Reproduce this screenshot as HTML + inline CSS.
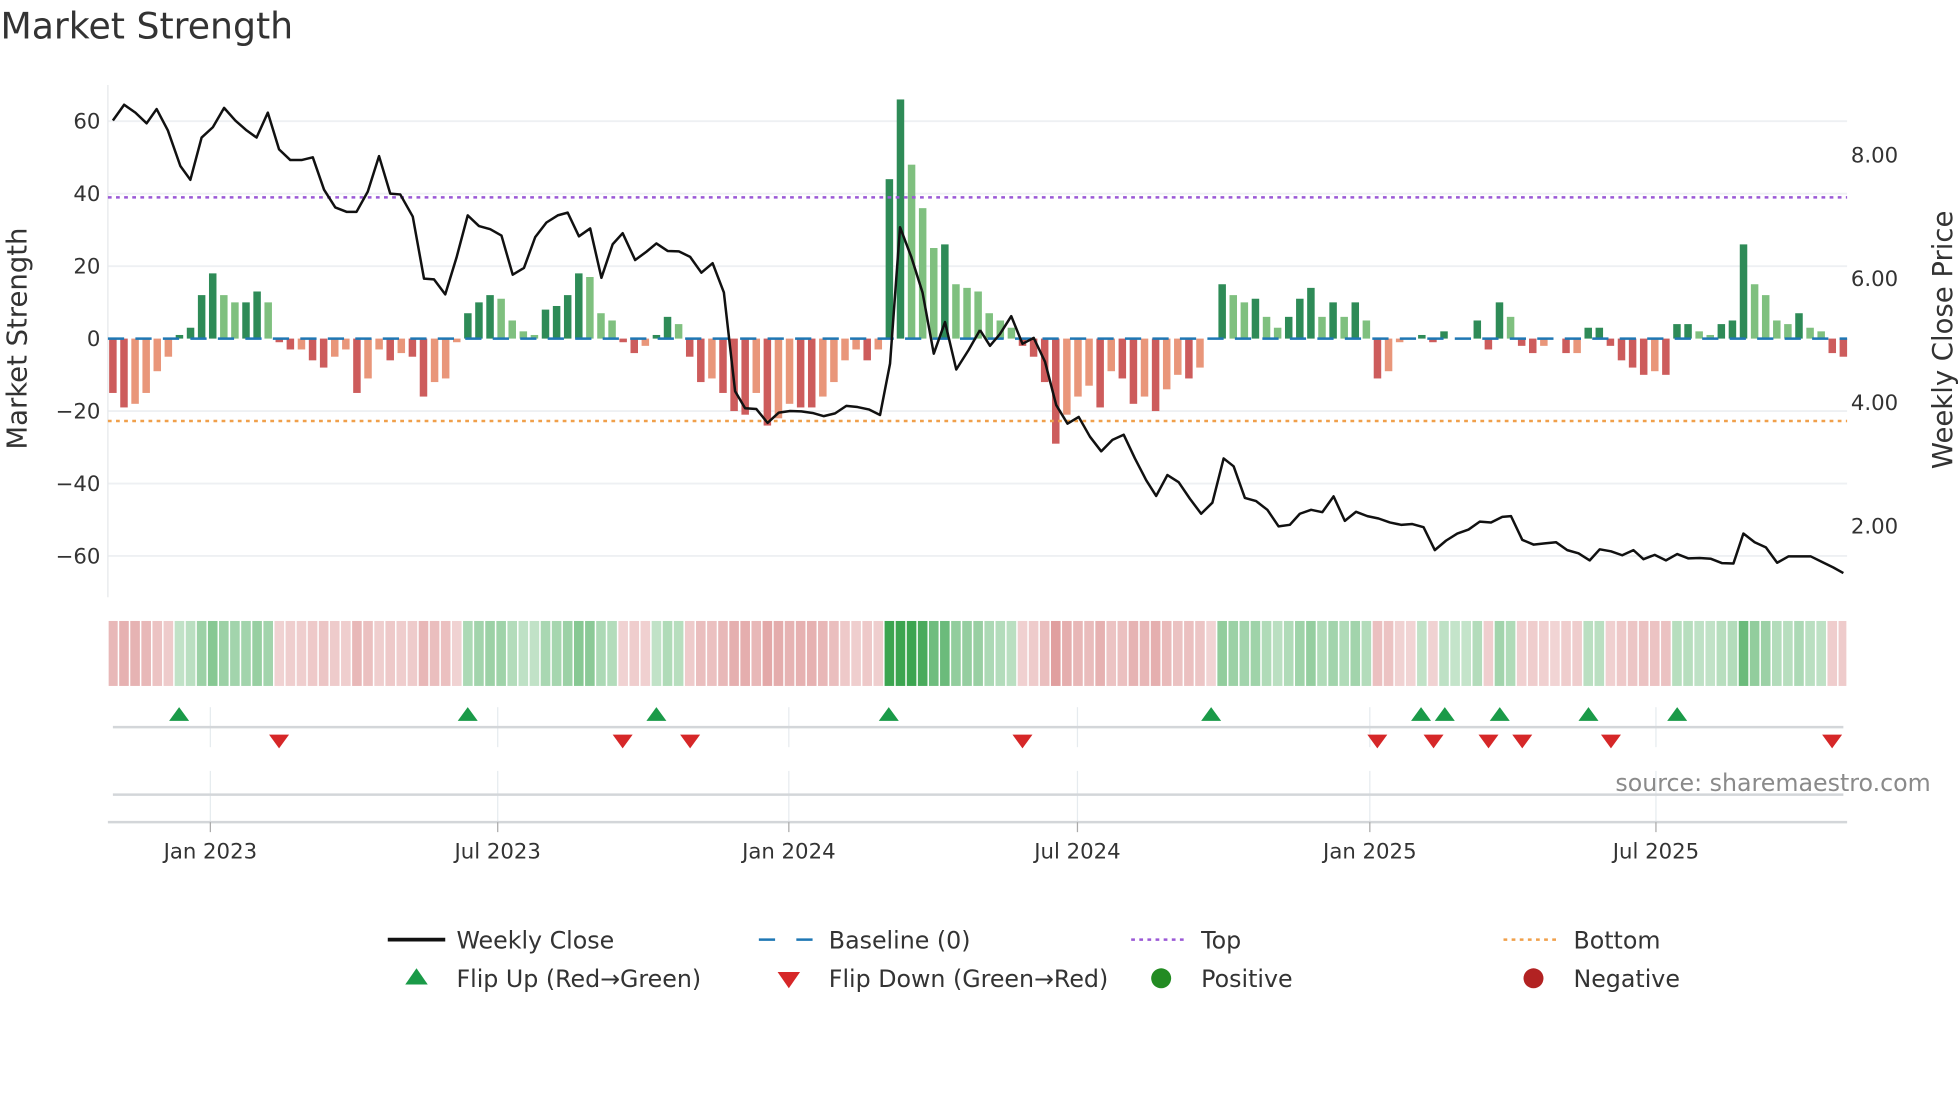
<!DOCTYPE html>
<html><head><meta charset="utf-8"><style>
html,body{margin:0;padding:0;background:#fff;}
svg{display:block;}
text{font-family:"DejaVu Sans","Liberation Sans",sans-serif;fill:#333;}
</style></head><body>
<svg id="s" xmlns="http://www.w3.org/2000/svg" width="1960" height="1102" viewBox="0 0 1568 882">
<rect width="1568" height="882" fill="#fff"/>
<text x="0" y="31" font-size="29">Market Strength</text>
<g stroke="#eef0f3" stroke-width="1.5">
<line x1="86" y1="97" x2="1478" y2="97"/><line x1="86" y1="155" x2="1478" y2="155"/>
<line x1="86" y1="213" x2="1478" y2="213"/><line x1="86" y1="329" x2="1478" y2="329"/>
<line x1="86" y1="387" x2="1478" y2="387"/><line x1="86" y1="445" x2="1478" y2="445"/>
</g>
<line x1="86" y1="68" x2="86" y2="478" stroke="#e6e8ea" stroke-width="1"/>
<g font-size="17" text-anchor="end">
<text x="80" y="103">60</text><text x="80" y="161">40</text><text x="80" y="219">20</text>
<text x="80" y="277">0</text><text x="80" y="335">−20</text><text x="80" y="393">−40</text><text x="80" y="451">−60</text>
</g>
<g font-size="17">
<text x="1481" y="130">8.00</text><text x="1481" y="229">6.00</text><text x="1481" y="328">4.00</text><text x="1481" y="427">2.00</text>
</g>
<text transform="translate(21,271) rotate(-90)" font-size="22" text-anchor="middle">Market Strength</text>
<text transform="translate(1562,272) rotate(-90)" font-size="22" text-anchor="middle">Weekly Close Price</text>
<g id="bars"></g>
<line x1="86" y1="271" x2="1478" y2="271" stroke="#1f77b4" stroke-width="2" stroke-dasharray="13,9"/>
<line x1="86" y1="158" x2="1478" y2="158" stroke="#9b59d6" stroke-width="2" stroke-dasharray="3,3.5"/>
<line x1="86" y1="337" x2="1478" y2="337" stroke="#f0a04b" stroke-width="2" stroke-dasharray="3,3.5"/>
<g fill="none" stroke="#111" stroke-width="2.5" stroke-linejoin="round">
<polyline vector-effect="non-scaling-stroke" transform="scale(0.5,0.3163)" points="180,305 198,265 216,285 234,312 250,276 268,330 288,420 304,455 322,348 340,322 358,273 376,305 394,330 410,348 428,285 446,378 464,405 482,405 500,398 518,480 536,525 554,536 570,536 588,485 606,395 624,490 640,492 660,548 678,705 694,707 712,745 730,652 748,545 766,572 784,580 802,596 820,695 838,678 856,600 874,563 892,545 908,538 926,598 944,578 962,703 980,618 996,590 1016,658 1034,637 1050,616 1068,635 1086,636 1104,650 1122,690 1140,666 1158,740 1176,990 1192,1033 1210,1035 1228,1070 1246,1044 1264,1040 1282,1041 1300,1045 1318,1053 1336,1046 1354,1027 1372,1030 1390,1036 1408,1050 1424,920 1440,575 1458,650 1476,740 1494,895 1512,815 1530,935 1550,885 1568,835"/>
<polyline vector-effect="non-scaling-stroke" transform="translate(784,0) scale(0.5,0.3163)" points="0,835 16,875 32,845 50,800 68,870 86,855 104,915 122,1025 140,1072 158,1055 176,1105 194,1142 212,1113 230,1100 248,1160 266,1215 282,1255 300,1202 318,1220 336,1262 354,1300 372,1272 390,1160 406,1180 424,1260 442,1268 460,1290 478,1332 496,1328 512,1300 530,1290 548,1296 566,1256 584,1318 602,1295 620,1306 638,1312 656,1322 674,1328 692,1326 710,1334 728,1392 746,1368 764,1350 782,1340 800,1320 818,1322 836,1308 850,1306 868,1366 886,1378 904,1375 922,1372 940,1392 958,1400 976,1418 992,1390 1010,1395 1028,1405 1046,1392 1062,1415 1080,1404 1098,1418 1116,1402 1134,1413 1152,1412 1170,1414 1188,1425 1206,1426 1222,1350 1240,1372 1258,1385 1276,1424 1294,1408 1312,1408 1330,1408 1348,1422 1366,1436 1382,1450"/>
</g>
<g id="strip"></g>
<g stroke="#e6ebef" stroke-width="1">
<line x1="168" y1="566" x2="168" y2="598"/><line x1="398" y1="566" x2="398" y2="598"/><line x1="631" y1="566" x2="631" y2="598"/><line x1="862" y1="566" x2="862" y2="598"/><line x1="1096" y1="566" x2="1096" y2="598"/><line x1="1325" y1="566" x2="1325" y2="598"/>
<line x1="168" y1="617" x2="168" y2="658"/><line x1="398" y1="617" x2="398" y2="658"/><line x1="631" y1="617" x2="631" y2="658"/><line x1="862" y1="617" x2="862" y2="658"/><line x1="1096" y1="617" x2="1096" y2="658"/><line x1="1325" y1="617" x2="1325" y2="658"/>
</g>
<line x1="90" y1="582" x2="1475" y2="582" stroke="#d3d6d9" stroke-width="2"/>
<line x1="90" y1="636" x2="1475" y2="636" stroke="#d3d6d9" stroke-width="2"/>
<line x1="86" y1="658" x2="1478" y2="658" stroke="#d3d6d9" stroke-width="2"/>
<g stroke="#aaa" stroke-width="1">
<line x1="168" y1="658" x2="168" y2="666"/><line x1="398" y1="658" x2="398" y2="666"/><line x1="631" y1="658" x2="631" y2="666"/><line x1="862" y1="658" x2="862" y2="666"/><line x1="1096" y1="658" x2="1096" y2="666"/><line x1="1325" y1="658" x2="1325" y2="666"/>
</g>
<g id="marks"></g>
<text x="1545" y="633" font-size="19" text-anchor="end" style="fill:#8a8a8a">source: sharemaestro.com</text>
<g font-size="17" text-anchor="middle">
<text x="168" y="687">Jan 2023</text><text x="398" y="687">Jul 2023</text><text x="631" y="687">Jan 2024</text>
<text x="862" y="687">Jul 2024</text><text x="1096" y="687">Jan 2025</text><text x="1325" y="687">Jul 2025</text>
</g>
<g font-size="19">
<line x1="310" y1="752" x2="356" y2="752" stroke="#111" stroke-width="3"/>
<text x="365" y="759">Weekly Close</text>
<line x1="607" y1="752" x2="651" y2="752" stroke="#1f77b4" stroke-width="2" stroke-dasharray="13,17"/>
<text x="663" y="759">Baseline (0)</text>
<line x1="905" y1="752" x2="949" y2="752" stroke="#9b59d6" stroke-width="2" stroke-dasharray="3,3.5"/>
<text x="961" y="759">Top</text>
<line x1="1203" y1="752" x2="1247" y2="752" stroke="#f0a04b" stroke-width="2" stroke-dasharray="3,3.5"/>
<text x="1259" y="759">Bottom</text>
<polygon points="324,788 342,788 333,775" fill="#1a9a48"/>
<text x="365" y="790">Flip Up (Red→Green)</text>
<polygon points="622,778 640,778 631,791" fill="#d62728"/>
<text x="663" y="790">Flip Down (Green→Red)</text>
<circle cx="929" cy="783" r="8" fill="#228b22"/>
<text x="961" y="790">Positive</text>
<circle cx="1227" cy="783" r="8" fill="#b22222"/>
<text x="1259" y="790">Negative</text>
</g>
</svg>
<script>
(function(){
var d="-15R,-19R,-18O,-15O,-9O,-5O,1D,3D,12D,18D,12L,10L,10D,13D,10L,-1R,-3R,-3O,-6R,-8R,-5O,-3O,-15R,-11O,-3O,-6R,-4O,-5R,-16R,-12O,-11O,-1O,7D,10D,12D,11L,5L,2L,1L,8D,9D,12D,18D,17L,7L,5L,-1R,-4R,-2O,1D,6D,4L,-5R,-12R,-11O,-15R,-20R,-21R,-15O,-24R,-22O,-18O,-19R,-19R,-16O,-12O,-6O,-3O,-6R,-3O,44D,66D,48L,36L,25L,26D,15L,14L,13L,7L,5L,3L,-2R,-5R,-12R,-29R,-21O,-16O,-13O,-19R,-9O,-11R,-18R,-16O,-20R,-14O,-10O,-11R,-8O,0N,15D,12L,10L,11D,6L,3L,6D,11D,14D,6L,10D,6L,10D,5L,-11R,-9O,-1O,0N,1D,-1R,2D,0N,0N,5D,-3R,10D,6L,-2R,-4R,-2O,0N,-4R,-4O,3D,3D,-2R,-6R,-8R,-10R,-9O,-10R,4D,4D,2L,1L,4D,5D,26D,15L,12L,5L,4L,7D,3L,2L,-4R,-5R".split(",");
var col={D:"#2e8b57",L:"#7fc07f",R:"#cd5c5c",O:"#e9967a",N:"none"};
var NS="http://www.w3.org/2000/svg",bars=document.getElementById("bars"),strip=document.getElementById("strip");
var step=(1475-90)/(d.length-1),prev=1;
function r(g,x,y,w,h,f){var e=document.createElementNS(NS,"rect");e.setAttribute("x",x);e.setAttribute("y",y);e.setAttribute("width",w);e.setAttribute("height",h);e.setAttribute("fill",f);g.appendChild(e);}
d.forEach(function(s,i){
 var v=parseFloat(s),c=s.slice(-1),cx=90+i*step;
 if(c!="N"&&v!=0){var h=Math.abs(v)*2.9;r(bars,cx-3,v>0?271-h:271,6,h,col[c]);}
 var sg=v>0?1:(v<0?-1:prev);prev=sg;var a=Math.min(Math.abs(v),66);
 var f;
 if(sg>0){var al=Math.min(0.3+a/40*0.7,1);f="rgba(60,165,80,"+al+")";}
 else{var al=0.28+Math.min(a,30)/30*0.35;f="rgba(205,100,100,"+al+")";}
 var x0=Math.max(86,cx-step/2),x1=Math.min(1478,cx+step/2);
 r(strip,x0+0.6,497,x1-x0-1.2,52,f);
});
var m=document.getElementById("marks");
[143,374,525,711,969,1137,1156,1200,1271,1342].forEach(function(x){var p=document.createElementNS(NS,"polygon");p.setAttribute("points",(x-8)+",577 "+(x+8)+",577 "+x+",566");p.setAttribute("fill","#1a9a48");m.appendChild(p);});
[223,498,552,818,1102,1147,1191,1218,1289,1466].forEach(function(x){var p=document.createElementNS(NS,"polygon");p.setAttribute("points",(x-8)+",588 "+(x+8)+",588 "+x+",599");p.setAttribute("fill","#d62728");m.appendChild(p);});
})();
</script>
</body></html>
